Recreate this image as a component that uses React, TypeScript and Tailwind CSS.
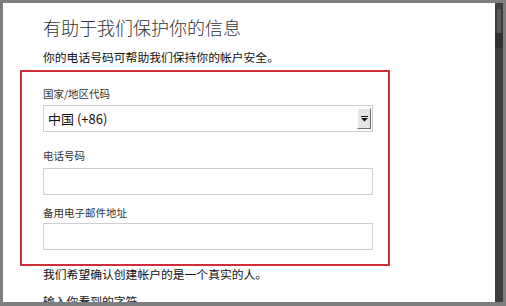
import React from "react";

const cjk = { fontFamily: '"Noto Sans CJK SC", "Noto Sans", sans-serif' };

function DropBtn() {
  return (
    <div className="w-[14px] h-[21px] bg-[#e4e4e4] border-t border-l border-t-white border-l-white border-r border-b border-r-[#6f6f6f] border-b-[#6f6f6f] flex items-center justify-center">
      <svg width="7" height="6" viewBox="0 0 7 6">
        <rect x="0" y="0" width="7" height="1" fill="#111" />
        <path d="M0 2 H7 L3.5 5.5 Z" fill="#111" />
      </svg>
    </div>
  );
}

export default function App() {
  return (
    <div className="w-[506px] h-[306px] bg-[#7e7e7e] pt-[3px] pl-[3px] pb-[4px] pr-[3px] flex overflow-hidden" style={cjk}>
      <div className="flex-1 bg-white overflow-hidden text-[#262626]">
        <div className="pl-[40px] pt-[15px]">
          <div className="text-[18px] leading-[18px] font-light text-[#333] h-[18px]">有助于我们保护你的信息</div>
          <div className="mt-[15px] text-[11.8px] leading-[12px] h-[12px] text-[#111]">你的电话号码可帮助我们保持你的帐户安全。</div>
        </div>
        <div className="ml-[17px] mt-[7px] w-[370px] h-[196px] border-2 border-[#cf2d38] pl-[21px] pr-[15px] pt-[16px]">
          <div className="text-[10.5px] leading-[11px] h-[11px] text-[#333]">国家/地区代码</div>
          <div className="mt-[6px] h-[27px] border border-[#cfcfcf] flex items-center pl-[4px] pr-[1px]">
            <span className="flex-1 text-[13px] text-[#111]">中国 (+86)</span>
            <DropBtn />
          </div>
          <div className="mt-[18px] text-[10.5px] leading-[11px] h-[11px] text-[#333]">电话号码</div>
          <div className="mt-[7px] h-[27px] border border-[#cfcfcf]" />
          <div className="mt-[12px] text-[10.5px] leading-[11px] h-[11px] text-[#333]">备用电子邮件地址</div>
          <div className="mt-[5px] h-[27px] border border-[#cfcfcf]" />
        </div>
        <div className="pl-[40px]">
          <div className="mt-[2px] text-[11.8px] leading-[12px] h-[12px] text-[#111]">我们希望确认创建帐户的是一个真实的人。</div>
          <div className="mt-[15px] text-[11.8px] leading-[12px] h-[12px] text-[#111]">输入你看到的字符</div>
        </div>
      </div>
      <div className="w-[8px] bg-[#3e3e3e] flex flex-col">
        <div className="h-[6px]" />
        <div className="mx-[2px] h-[24px] bg-[#5a5a5a]" />
        <div className="h-[15px] bg-[#2f2f2f]" />
      </div>
    </div>
  );
}
